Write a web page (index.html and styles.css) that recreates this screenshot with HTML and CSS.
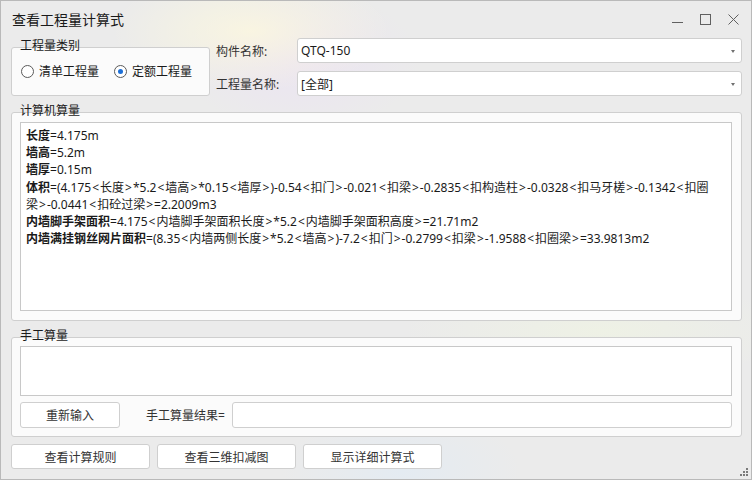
FILE: index.html
```html
<!DOCTYPE html>
<html lang="zh-CN">
<head>
  <meta charset="UTF-8">
  <title>查看工程量计算式</title>
  <link rel="stylesheet" href="styles.css">
</head>
<body>
<div class="window">
  <!-- Заголовок -->
  <div class="titlebar">
    <span class="title">查看工程量计算式</span>
    <div class="win-controls">
      <svg width="11" height="11" viewBox="0 0 11 11"><path d="M0 8.5h11" stroke="#606060" stroke-width="1"/></svg>
      <svg width="11" height="11" viewBox="0 0 11 11"><rect x="0.5" y="0.5" width="10" height="10" fill="none" stroke="#606060" stroke-width="1"/></svg>
      <svg width="11" height="11" viewBox="0 0 11 11"><path d="M0.5 0.5l10 10M10.5 0.5l-10 10" stroke="#606060" stroke-width="1"/></svg>
    </div>
  </div>

  <div class="content">
    <div class="top-row">
      <div class="group kind-group">
        <span class="group-title">工程量类别</span>
        <label class="radio"><span class="radio-dot"></span>清单工程量</label>
        <label class="radio checked"><span class="radio-dot"></span>定额工程量</label>
      </div>
      <div class="form-grid">
        <span class="form-label">构件名称:</span>
        <div class="combo">QTQ-150<span class="combo-arrow"></span></div>
        <span class="form-label">工程量名称:</span>
        <div class="combo">[全部]<span class="combo-arrow"></span></div>
      </div>
    </div>

    <!-- Расчёт -->
    <div class="group calc-group">
      <span class="group-title">计算机算量</span>
      <div class="text-box calc-text">
        <div><b>长度</b>=4.175m</div>
        <div><b>墙高</b>=5.2m</div>
        <div><b>墙厚</b>=0.15m</div>
        <div><b>体积</b>=(4.175<i>&lt;</i>长度<i>&gt;</i>*5.2<i>&lt;</i>墙高<i>&gt;</i>*0.15<i>&lt;</i>墙厚<i>&gt;</i>)-0.54<i>&lt;</i>扣门<i>&gt;</i>-0.021<i>&lt;</i>扣梁<i>&gt;</i>-0.2835<i>&lt;</i>扣构造柱<i>&gt;</i>-0.0328<i>&lt;</i>扣马牙槎<i>&gt;</i>-0.1342<i>&lt;</i>扣圈<br>梁<i>&gt;</i>-0.0441<i>&lt;</i>扣砼过梁<i>&gt;</i>=2.2009m3</div>
        <div><b>内墙脚手架面积</b>=4.175<i>&lt;</i>内墙脚手架面积长度<i>&gt;</i>*5.2<i>&lt;</i>内墙脚手架面积高度<i>&gt;</i>=21.71m2</div>
        <div><b>内墙满挂钢丝网片面积</b>=(8.35<i>&lt;</i>内墙两侧长度<i>&gt;</i>*5.2<i>&lt;</i>墙高<i>&gt;</i>)-7.2<i>&lt;</i>扣门<i>&gt;</i>-0.2799<i>&lt;</i>扣梁<i>&gt;</i>-1.9588<i>&lt;</i>扣圈梁<i>&gt;</i>=33.9813m2</div>
      </div>
    </div>

    <div class="group manual-group">
      <span class="group-title">手工算量</span>
      <div class="text-box manual-text"></div>
      <div class="manual-row">
        <button class="btn reset-btn">重新输入</button>
        <span class="result-label">手工算量结果=</span>
        <div class="result-input"></div>
      </div>
    </div>

    <div class="bottom-row">
      <button class="btn bottom-btn">查看计算规则</button>
      <button class="btn bottom-btn">查看三维扣减图</button>
      <button class="btn bottom-btn">显示详细计算式</button>
    </div>
  </div>

  <svg class="grip" width="9" height="9" viewBox="0 0 9 9">
    <rect x="6" y="0" width="2" height="2" fill="#7a7a7a"/>
    <rect x="3" y="3" width="2" height="2" fill="#7a7a7a"/>
    <rect x="6" y="3" width="2" height="2" fill="#7a7a7a"/>
    <rect x="0" y="6" width="2" height="2" fill="#7a7a7a"/>
    <rect x="3" y="6" width="2" height="2" fill="#7a7a7a"/>
    <rect x="6" y="6" width="2" height="2" fill="#7a7a7a"/>
  </svg>
</div>
</body>
</html>
```

FILE: styles.css
```css
body {
  margin: 0;
  padding: 0;
  font-family: "Noto Sans", "Noto Sans CJK SC", sans-serif;
  font-size: 12px;
  color: #1a1a1a;
}

.window {
  position: relative;
  width: 752px;
  height: 480px;
  box-sizing: border-box;
  border: 1px solid #b9b9b9;
  background-color: #ebebeb;
  background-image:
    radial-gradient(ellipse 140px 60px at 250px 30px, rgba(255, 250, 220, 0.7), transparent),
    radial-gradient(ellipse 120px 70px at 300px 60px, rgba(235, 225, 245, 0.7), transparent),
    radial-gradient(ellipse 200px 50px at 600px 330px, rgba(240, 245, 225, 0.6), transparent),
    radial-gradient(ellipse 120px 60px at 400px 470px, rgba(225, 235, 245, 0.7), transparent);
  overflow: hidden;
}

/* Заголовок */
.titlebar {
  height: 37px;
  display: flex;
  align-items: center;
  justify-content: space-between;
  padding-left: 11px;
}
.title {
  font-size: 14px;
  color: #1a1a1a;
  line-height: 16px;
}
.win-controls {
  display: flex;
  gap: 17px;
  padding-right: 12px;
  margin-top: -1px;
}

.content {
  padding: 0 9px 0 10px;
}

/* Верхняя строка */
.top-row {
  display: flex;
  align-items: flex-start;
  height: 58px;
}
.group {
  position: relative;
  box-sizing: border-box;
  border: 1px solid #cfcfcf;
  border-radius: 3px;
  background: #fbfbfb;
}
.group-title {
  position: absolute;
  top: -10px;
  left: 8px;
  line-height: 16px;
  font-size: 12px;
  color: #1a1a1a;
}
.kind-group {
  width: 199px;
  height: 49px;
  margin-top: 9px;
  display: flex;
  align-items: center;
  padding: 0 0 1px 9px;
  gap: 15px;
}
.radio {
  display: flex;
  align-items: center;
  gap: 5px;
  font-size: 12px;
}
.radio-dot {
  width: 11px;
  height: 11px;
  border: 1px solid #5a5a5a;
  border-radius: 50%;
  background: #fff;
  display: flex;
  align-items: center;
  justify-content: center;
}
.radio.checked .radio-dot::after {
  content: "";
  width: 5px;
  height: 5px;
  border-radius: 50%;
  background: #1d6fd6;
}

.form-grid {
  margin-left: 6px;
  display: grid;
  grid-template-columns: 81px 1fr;
  grid-template-rows: 25px 25px;
  row-gap: 8px;
  flex: 1;
}
.form-label {
  display: flex;
  align-items: center;
  color: #333;
}
.combo {
  position: relative;
  box-sizing: border-box;
  border: 1px solid #cfcfcf;
  border-radius: 3px;
  background: #fff;
  padding-left: 3px;
  display: flex;
  align-items: center;
  font-size: 12px;
}
.combo-arrow {
  position: absolute;
  right: 6px;
  top: 11px;
  width: 0;
  height: 0;
  border-left: 2.5px solid transparent;
  border-right: 2.5px solid transparent;
  border-top: 3px solid #707070;
}

/* Компьютерный расчёт */
.calc-group {
  margin-top: 16px;
  height: 209px;
  padding: 9px 9px 9px 8px;
}
.text-box {
  box-sizing: border-box;
  border: 1px solid #c8c8c8;
  background: #fff;
}
.calc-text {
  height: 100%;
  padding: 4px 5px;
  line-height: 17.2px;
  white-space: nowrap;
  overflow: hidden;
}
.calc-text b {
  font-weight: bold;
}
.calc-text i {
  font-style: normal;
  margin: 0 1px;
}

/* Ручной расчёт */
.manual-group {
  margin-top: 16px;
  height: 100px;
  padding: 8px 9px 0 8px;
}
.manual-text {
  height: 50px;
}
.manual-row {
  display: flex;
  align-items: center;
  margin-top: 6px;
  height: 26px;
}
.btn {
  box-sizing: border-box;
  border: 1px solid #cfcfcf;
  border-radius: 3px;
  background: #fff;
  font-family: "Noto Sans", "Noto Sans CJK SC", sans-serif;
  font-size: 12px;
  color: #333;
  padding: 0;
}
.reset-btn {
  width: 100px;
  height: 26px;
}
.result-label {
  margin-left: 26px;
  width: 86px;
  color: #333;
}
.result-input {
  flex: 1;
  height: 26px;
  box-sizing: border-box;
  border: 1px solid #cfcfcf;
  border-radius: 3px;
  background: #fff;
}

.bottom-row {
  display: flex;
  gap: 7px;
  margin-top: 7px;
}
.bottom-btn {
  width: 139px;
  height: 25px;
}

.grip {
  position: absolute;
  right: 2px;
  bottom: 2px;
}
```
